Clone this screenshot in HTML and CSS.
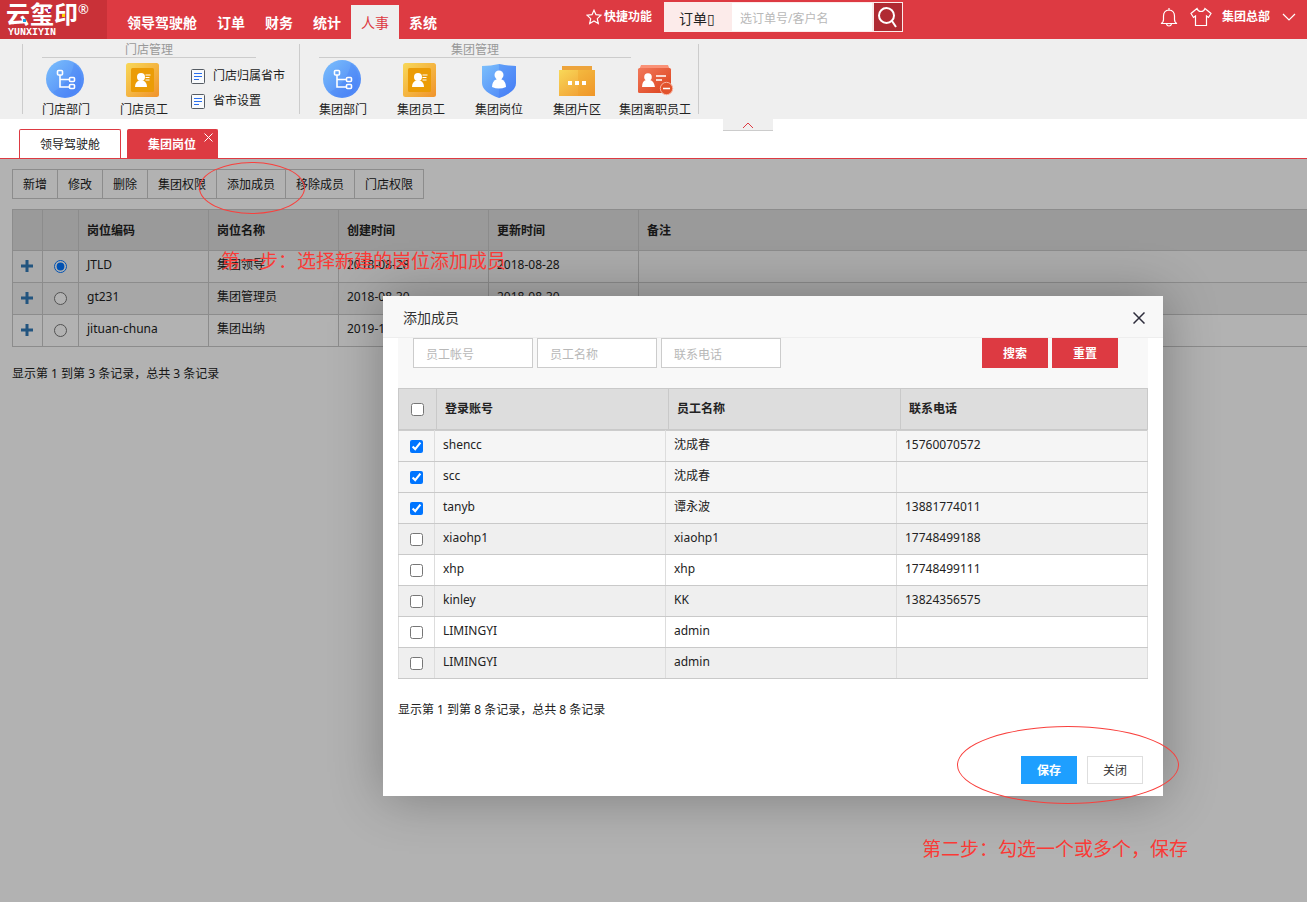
FILE: index.html
```html
<!DOCTYPE html>
<html lang="zh-CN">
<head>
<meta charset="utf-8">
<title>云玺印 - 集团岗位</title>
<link rel="stylesheet" href="styles.css">
</head>
<body>
<svg class="defs" aria-hidden="true">
  <defs>
    <linearGradient id="blue" x1="0" y1="0" x2="1" y2="1"><stop offset="0" stop-color="#7cc0fc"/><stop offset="1" stop-color="#467df6"/></linearGradient>
    <linearGradient id="gold" x1="0" y1="0" x2="1" y2="1"><stop offset="0" stop-color="#f8d858"/><stop offset="1" stop-color="#f0932c"/></linearGradient>
    <linearGradient id="red" x1="0" y1="0" x2="1" y2="1"><stop offset="0" stop-color="#f1785a"/><stop offset="1" stop-color="#dc411b"/></linearGradient>
    <symbol id="dept" viewBox="1 0 38 38" overflow="visible">
      <circle cx="19" cy="19" r="19" fill="url(#blue)"/>
      <path d="M28 3A19 19 0 0 1 12 36.500L7 32Q25 22 28 3z" fill="#3f78f5" opacity=".25"/>
      <g fill="none" stroke="#fff" stroke-width="1.600"><rect x="11.500" y="10.500" width="5" height="4.500" rx="1"/><path d="M14 15v12h9M14 19.500h9"/><rect x="23.500" y="17.500" width="5" height="4" rx="1"/><rect x="23.500" y="24.500" width="5" height="4" rx="1"/></g>
    </symbol>
    <symbol id="staff" viewBox="1 0 38 38" overflow="visible">
      <rect x="2" y="3" width="33" height="34" rx="2.500" fill="url(#gold)"/>
      <rect x="7" y="8" width="23" height="24" rx="1.500" fill="#eb9c06"/>
      <circle cx="17" cy="17" r="4" fill="#fff"/><path d="M11 27q0-5 4-6.500h4q4 1.500 4 6.500z" fill="#fff"/>
      <path d="M21.500 15h5M21.500 17.500h4M21.500 20h4" stroke="#fff"/>
    </symbol>
    <symbol id="post" viewBox="0 0 38 38">
      <path d="M2 6Q11 6 19 4q8 2 17 2v17q0 9-17 15Q2 32 2 23z" fill="url(#blue)"/>
      <path d="M19 4q8 2 17 2v17q0 9-17 15z" fill="#3f78f5" opacity=".3"/>
      <circle cx="19" cy="15" r="4.500" fill="#fff"/><path d="M12 27q0-6 5-8h4q5 2 5 8-7 3-14 0z" fill="#fff"/>
    </symbol>
    <symbol id="area" viewBox="0 0 38 38">
      <path d="M4 6h30v5H4z" fill="#eda43c"/><path d="M1 10h36v26H1z" fill="url(#gold)"/><path d="M20 10h17v26H20z" fill="#f09a20" opacity=".3"/>
      <path d="M10 21h4v4h-4zM17 21h4v4h-4zM24 21h4v4h-4z" fill="#fff"/>
    </symbol>
    <symbol id="leave" viewBox="0 0 38 38">
      <path d="M5 5h27l2 5H3z" fill="#fa9277"/><rect x="2" y="8" width="33" height="25" rx="1.500" fill="url(#red)"/>
      <circle cx="12" cy="17" r="3.800" fill="#fff"/><path d="M6 27q0-6 4-7h4q4 1 5 7z" fill="#fff"/>
      <path d="M20 16h10M20 20h6" stroke="#fff" stroke-width="1.300"/>
      <circle cx="30.500" cy="28.500" r="6.200" fill="#e2532c" stroke="#f9b6a3"/><path d="M27 28.500h7" stroke="#fff" stroke-width="1.500"/>
    </symbol>
    <symbol id="sheet" viewBox="0 0 14 16"><rect x=".5" y="1.500" width="13" height="14" rx="1" fill="#f8fafc" stroke="#555b63"/><path d="M3 5.500h8M3 8.500h8M3 11.500h5" stroke="#2a6fee"/></symbol>
    <symbol id="plus" viewBox="0 0 12 12"><path d="M4.500 0h3v4.500H12v3H7.500V12h-3V7.500H0v-3h4.500z" fill="#337ab7"/></symbol>
  </defs>
</svg>

<header class="topbar">
  <a class="logo" href="#" aria-label="云玺印">
    <span class="logo-name">云玺印</span>
    <span class="logo-mark">®</span>
    <span class="logo-latin">YUNXIYIN</span>
    <i class="dot dot-blue"></i><i class="dot dot-purple"></i><i class="dot dot-yellow"></i>
  </a>
  <nav class="mainnav">
    <a href="#">领导驾驶舱</a><a href="#">订单</a><a href="#">财务</a><a href="#">统计</a><a class="active" href="#">人事</a><a href="#">系统</a>
  </nav>
  <div class="tools">
    <a class="quick" href="#"><svg width="16" height="16" viewBox="0 0 16 16"><path d="M8 1.200l2 4.500 5 .5-3.700 3.400 1 5L8 12l-4.300 2.600 1-5L1 6.200l5-.5z" fill="none" stroke="#fff" stroke-width="1.200"/></svg>快捷功能</a>
    <form class="search">
      <select aria-label="搜索类型"><option>订单▯</option></select>
      <input type="text" aria-label="搜索" placeholder="选订单号/客户名">
      <button type="button" aria-label="搜索"><svg width="22" height="22" viewBox="0 0 22 22" fill="none" stroke="#fff" stroke-width="2"><circle cx="9.500" cy="9.500" r="7.500"/><path d="M15 15l4 6"/></svg></button>
    </form>
  </div>
  <div class="account">
    <button type="button" aria-label="通知"><svg width="18" height="20" viewBox="0 0 18 20" fill="none" stroke="#fff" stroke-width="1.200"><path d="M9 1v2M1 16.500h16q-2.500-1-2.500-4V9q0-5.500-5.500-6-5.500.5-5.500 6v3.500q0 3-2.500 4zM6.500 17q.5 2 2.500 2t2.500-2"/></svg></button>
    <button type="button" aria-label="主题"><svg width="22" height="20" viewBox="0 0 22 20" fill="none" stroke="#fff" stroke-width="1.200"><path d="M7 1.500L1 6.500l2.500 4 2-1.500v9.500h11V9l2 1.500 2.500-4-6-5q-1 3-4 3t-4-3z"/></svg></button>
    <a href="#">集团总部</a>
    <button type="button" aria-label="展开"><svg width="14" height="8" viewBox="0 0 14 8" fill="none" stroke="#fff" stroke-width="1.200"><path d="M1 1l6 6 6-6"/></svg></button>
  </div>
</header>

<section class="ribbon">
  <div class="group">
    <h2 class="group-title store-title">门店管理</h2>
    <div class="group-items">
      <a class="app" href="#"><svg><use href="#dept"/></svg>门店部门</a>
      <a class="app" href="#"><svg><use href="#staff"/></svg>门店员工</a>
      <div class="links">
        <a href="#"><svg><use href="#sheet"/></svg>门店归属省市</a>
        <a href="#"><svg><use href="#sheet"/></svg>省市设置</a>
      </div>
    </div>
  </div>
  <div class="group last">
    <h2 class="group-title corp-title">集团管理</h2>
    <div class="group-items">
      <a class="app" href="#"><svg><use href="#dept"/></svg>集团部门</a>
      <a class="app" href="#"><svg><use href="#staff"/></svg>集团员工</a>
      <a class="app" href="#"><svg><use href="#post"/></svg>集团岗位</a>
      <a class="app" href="#"><svg><use href="#area"/></svg>集团片区</a>
      <a class="app" href="#"><svg><use href="#leave"/></svg>集团离职员工</a>
    </div>
  </div>
  <button class="collapse" type="button" aria-label="收起"><svg width="12" height="7" viewBox="0 0 12 7" fill="none" stroke="#dd3a42"><path d="M1 6l5-5 5 5"/></svg></button>
</section>

<div class="pagetabs">
  <a class="pagetab" href="#">领导驾驶舱</a>
  <a class="pagetab current" href="#">集团岗位<svg class="tab-close" width="9" height="9" viewBox="0 0 9 9" stroke="#fff"><path d="M.5.500l8 8M8.500.500l-8 8"/></svg></a>
</div>

<main class="content">
  <div class="toolbar">
    <button type="button">新增</button><button type="button">修改</button><button type="button">删除</button><button type="button">集团权限</button><button type="button">添加成员</button><button type="button">移除成员</button><button type="button">门店权限</button>
  </div>
  <table class="grid posts">
    <colgroup><col class="c-plus"><col class="c-radio"><col class="c-name"><col class="c-name"><col class="c-date"><col class="c-date"><col></colgroup>
    <thead><tr><th></th><th></th><th>岗位编码</th><th>岗位名称</th><th>创建时间</th><th>更新时间</th><th>备注</th></tr></thead>
    <tbody>
      <tr class="picked"><td class="mid expand"><a href="#" aria-label="展开"><svg><use href="#plus"/></svg></a></td><td class="mid"><input type="radio" name="post" aria-label="JTLD" checked></td><td>JTLD</td><td>集团领导</td><td>2018-08-28</td><td>2018-08-28</td><td></td></tr>
      <tr class="even"><td class="mid expand"><a href="#" aria-label="展开"><svg><use href="#plus"/></svg></a></td><td class="mid"><input type="radio" name="post" aria-label="gt231"></td><td>gt231</td><td>集团管理员</td><td>2018-08-30</td><td>2018-08-30</td><td></td></tr>
      <tr><td class="mid expand"><a href="#" aria-label="展开"><svg><use href="#plus"/></svg></a></td><td class="mid"><input type="radio" name="post" aria-label="jituan-chuna"></td><td>jituan-chuna</td><td>集团出纳</td><td>2019-10-16</td><td>2019-10-16</td><td></td></tr>
    </tbody>
  </table>
  <p class="summary">显示第 1 到第 3 条记录，总共 3 条记录</p>
  <div class="shade"></div>
</main>

<div class="dialog" role="dialog" aria-labelledby="dialog-title">
  <div class="dialog-head">
    <h1 id="dialog-title">添加成员</h1>
    <button type="button" aria-label="关闭窗口"><svg width="12" height="12" viewBox="0 0 12 12" stroke="#2e2d3c" stroke-width="1.500"><path d="M.5.500l11 11M11.500.500l-11 11"/></svg></button>
  </div>
  <div class="dialog-body">
    <form class="filter">
      <input type="text" aria-label="员工帐号" placeholder="员工帐号">
      <input type="text" aria-label="员工名称" placeholder="员工名称">
      <input type="text" aria-label="联系电话" placeholder="联系电话">
      <span class="filter-actions"><button type="button">搜索</button><button type="button">重置</button></span>
    </form>
    <table class="grid members-head">
      <colgroup><col class="h-check"><col class="h-text"><col class="h-text"><col></colgroup>
      <thead><tr><th class="mid"><input type="checkbox" aria-label="全选"></th><th>登录账号</th><th>员工名称</th><th>联系电话</th></tr></thead>
    </table>
    <table class="grid members">
      <colgroup><col class="b-check"><col class="b-text"><col class="b-text"><col></colgroup>
      <tbody>
        <tr class="picked"><td class="mid"><input type="checkbox" aria-label="shencc" checked></td><td>shencc</td><td>沈成春</td><td>15760070572</td></tr>
        <tr class="picked"><td class="mid"><input type="checkbox" aria-label="scc" checked></td><td>scc</td><td>沈成春</td><td></td></tr>
        <tr class="picked"><td class="mid"><input type="checkbox" aria-label="tanyb" checked></td><td>tanyb</td><td>谭永波</td><td>13881774011</td></tr>
        <tr class="even"><td class="mid"><input type="checkbox" aria-label="xiaohp1"></td><td>xiaohp1</td><td>xiaohp1</td><td>17748499188</td></tr>
        <tr><td class="mid"><input type="checkbox" aria-label="xhp"></td><td>xhp</td><td>xhp</td><td>17748499111</td></tr>
        <tr class="even"><td class="mid"><input type="checkbox" aria-label="kinley"></td><td>kinley</td><td>KK</td><td>13824356575</td></tr>
        <tr><td class="mid"><input type="checkbox" aria-label="LIMINGYI"></td><td>LIMINGYI</td><td>admin</td><td></td></tr>
        <tr class="even"><td class="mid"><input type="checkbox" aria-label="LIMINGYI"></td><td>LIMINGYI</td><td>admin</td><td></td></tr>
      </tbody>
    </table>
    <p class="summary">显示第 1 到第 8 条记录，总共 8 条记录</p>
  </div>
  <div class="dialog-foot">
    <button class="save" type="button">保存</button>
    <button type="button">关闭</button>
  </div>
</div>

<div class="ring ring-one"></div>
<p class="note note-one">第一步：选择新建的岗位添加成员</p>
<div class="ring ring-two"></div>
<p class="note note-two">第二步：勾选一个或多个，保存</p>
</body>
</html>
```
FILE: styles.css
```css
* { box-sizing: border-box; }

html { height: 100%; }

body {
  position: relative;
  display: flex;
  flex-direction: column;
  min-height: 100%;
  margin: 0;
  overflow-x: hidden;
  background: #fff;
  color: #222;
  font: 12px/18px "Noto Sans", "Noto Sans CJK SC", sans-serif;
}

a { color: inherit; text-decoration: none; }
h1, h2, p { margin: 0; font-weight: 400; }
svg { display: block; }
button { margin: 0; padding: 0; border: 0; background: none; color: inherit; font: inherit; }
input, select { font: inherit; }
input::placeholder { color: #b8b8b8; opacity: 1; }
.defs { position: absolute; width: 0; height: 0; }

/* top bar */
.topbar {
  display: flex;
  height: 39px;
  background: #dd3a42;
  color: #fff;
}
.logo { position: relative; width: 107px; background: #c93138; }
.logo-name {
  position: absolute;
  left: 6px;
  top: 1px;
  font-size: 24px;
  line-height: 26px;
  font-weight: 700;
}
.logo-mark { position: absolute; left: 78px; top: 0; font-size: 13px; line-height: 18px; }
.logo-latin {
  position: absolute;
  left: 8px;
  top: 28px;
  font: bold 10px/10px "Liberation Mono", monospace;
}
.dot { position: absolute; width: 3px; height: 3px; }
.dot-blue { left: 23px; top: 19px; background: #1a9de0; }
.dot-purple { left: 48px; top: 9px; background: #8b1a8b; }
.dot-yellow { left: 62px; top: 14px; background: #ffd500; }

.mainnav { display: flex; align-items: flex-end; margin-left: 10px; }
.mainnav a {
  height: 34px;
  padding: 0 10px;
  font-size: 14px;
  line-height: 36px;
  font-weight: 700;
}
.mainnav .active { background: #efefef; color: #dd3a42; font-weight: 400; }

.tools { display: flex; align-items: flex-start; margin-left: 139px; padding-top: 2px; }
.quick { display: flex; align-items: center; gap: 2px; height: 30px; font-weight: 700; }
.search { display: flex; width: 239px; height: 30px; margin-left: 12px; }
.search select {
  width: 67px;
  padding: 4px 0 0 15px;
  border: 0;
  border-radius: 0;
  appearance: none;
  background: #fcebea;
  color: #222;
  font-size: 14px;
}
.search input {
  flex: 1;
  min-width: 0;
  padding: 3px 8px 0;
  border: 1px solid #fcebea;
  background: #fff;
}
.search button { width: 30px; padding-left: 3px; border: 1px solid #fcebea; background: #b02a32; }

.account {
  display: flex;
  align-items: center;
  height: 34px;
  margin-left: auto;
  padding-right: 11px;
  font-weight: 700;
}
.account button + button { margin-left: 12px; }
.account a { margin: 0 12px 0 10px; }

/* ribbon */
.ribbon { position: relative; display: flex; height: 80px; padding: 5px 22px; background: #efefef; }
.group { height: 70px; padding: 0 14px 0 4px; border-left: 1px solid #ccc; }
.group.last { padding-right: 4px; border-right: 1px solid #ccc; }
.group-title {
  height: 14px;
  margin-left: 15px;
  border-bottom: 1px solid #ccc;
  color: #999;
  font-size: 12px;
  line-height: 11px;
  text-align: center;
}
.store-title { width: 214px; }
.corp-title { width: 312px; }
.group-items { display: flex; }
.app {
  display: flex;
  flex-direction: column;
  align-items: center;
  width: 78px;
  padding-top: 2px;
  line-height: 23px;
  white-space: nowrap;
}
.app svg { width: 38px; height: 38px; overflow: visible; }
.links { display: flex; flex-direction: column; gap: 7px; padding: 9px 0 0 8px; }
.links a { display: flex; align-items: center; gap: 8px; }
.links svg { width: 14px; height: 16px; }
.collapse {
  position: absolute;
  left: 723px;
  top: 100%;
  width: 50px;
  height: 12px;
  padding: 2px 19px 0;
  border-bottom: 1px solid #ccc;
  background: #efefef;
}

/* page tabs */
.pagetabs {
  display: flex;
  align-items: flex-end;
  gap: 6px;
  height: 40px;
  padding-left: 19px;
  border-bottom: 1px solid #dd3a42;
}
.pagetab {
  height: 29px;
  padding: 0 20px;
  border: 1px solid #dd3a42;
  border-bottom: 0;
  border-radius: 2px 2px 0 0;
  line-height: 29px;
}
.pagetab.current { position: relative; padding-right: 21px; background: #dd3a42; color: #fff; font-weight: 700; }
.tab-close { position: absolute; right: 4px; top: 3px; }

/* page content */
.content { position: relative; flex: 1; padding: 10px 0 0 12px; overflow: hidden; }
.shade { position: absolute; inset: 0; background: rgba(0, 0, 0, .3); }
.toolbar { display: flex; height: 30px; }
.toolbar button { padding: 2px 10px 0; border: 1px solid #c9c9c9; border-right: 0; }
.toolbar button:last-child { border-right: 1px solid #c9c9c9; }

.grid { width: 100%; border-collapse: collapse; table-layout: fixed; }
.grid th, .grid td { border: 1px solid #c9c9c9; text-align: left; }
.grid th { padding: 0 8px; background: #ddd; font-weight: 700; }
.grid td { padding: 0 8px 3px; }
.grid .mid { padding: 0; text-align: center; }
.grid input { display: block; width: 13px; height: 13px; margin: 0 auto; }
.picked { background: #f5f5f5; }
.even { background: #efefef; }

.posts { margin-top: 10px; }
.posts th { height: 41px; padding-top: 2px; }
.posts td { height: 32px; }
.posts th:last-child, .posts td:last-child { border-right: 0; }
.posts .expand { padding: 0 2px 2px 0; }
.posts td svg { width: 12px; height: 12px; margin: 0 auto; }
.c-plus { width: 30px; }
.c-radio { width: 36px; }
.c-name { width: 130px; }
.c-date { width: 150px; }
.summary { word-spacing: normal; }
.content .summary { margin-top: 18px; }

/* dialog */
.dialog {
  position: absolute;
  left: 383px;
  top: 296px;
  display: flex;
  flex-direction: column;
  width: 780px;
  height: 500px;
  background: #fff;
  box-shadow: 1px 1px 50px rgba(0, 0, 0, .3);
}
.dialog-head {
  display: flex;
  align-items: center;
  justify-content: space-between;
  height: 42px;
  padding: 2px 18px 0 20px;
  border-bottom: 1px solid #eee;
  background: #f8f8f8;
}
.dialog-head h1 { color: #333; font-size: 14px; }
.dialog-body { flex: 1; padding: 0 15px; }
.filter {
  display: flex;
  gap: 4px;
  height: 50px;
  padding: 0 30px 0 15px;
  background: #f8f8f8;
}
.filter input { width: 120px; height: 30px; padding: 3px 12px 0; border: 1px solid #ccc; background: #fff; }
.filter-actions { display: flex; gap: 4px; margin-left: auto; }
.filter-actions button { width: 66px; height: 30px; padding-top: 1px; background: #dd3a42; color: #fff; font-weight: 700; }
.members-head th { height: 41px; }
.members td { height: 31px; border-top: 1px solid #ccc; border-right-color: #ddd; border-left-color: #ddd; }
.h-check { width: 38px; }
.h-text { width: 232px; }
.b-check { width: 36px; }
.b-text { width: 231px; }
.dialog-body .summary { margin-top: 22px; }
.dialog-foot { display: flex; justify-content: flex-end; gap: 10px; padding: 0 20px 12px; }
.dialog-foot button { width: 56px; height: 28px; padding-top: 2px; border: 1px solid #dedede; background: #fff; color: #333; }
.dialog-foot .save { border-color: #1e9fff; background: #1e9fff; color: #fff; font-weight: 700; }

/* guide marks */
.ring { position: absolute; border: 1px solid #f9403d; border-radius: 50%; pointer-events: none; }
.ring-one { left: 199px; top: 162px; width: 106px; height: 52px; }
.ring-two { left: 957px; top: 726px; width: 222px; height: 78px; }
.note { position: absolute; color: #fa3a36; font-size: 19px; line-height: 28px; white-space: nowrap; }
.note-one { left: 221px; top: 247px; }
.note-two { left: 922px; top: 835px; }
```
